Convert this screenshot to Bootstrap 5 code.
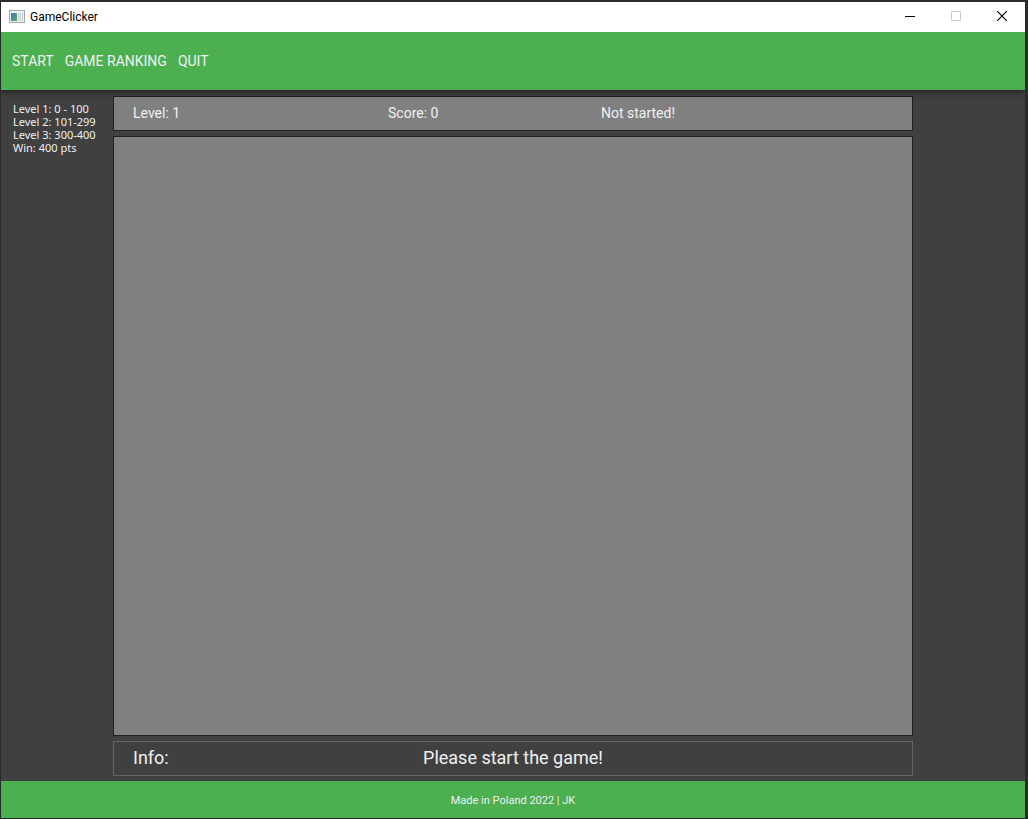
<!DOCTYPE html>
<html lang="en">
<head>
<meta charset="utf-8">
<meta name="viewport" content="width=device-width, initial-scale=1">
<title>GameClicker</title>
<link href="https://cdn.jsdelivr.net/npm/bootstrap@5.3.0/dist/css/bootstrap.min.css" rel="stylesheet">
<style>
  body { background: #2b2b2b; color: #f0f0f0; font-family: Tahoma, "Noto Sans", sans-serif; font-size: 11px; line-height: 13px; padding: 2px 3px 1px 1px; }
  .title-bar { height: 30px; background: #fff; color: #000; font-family: "Segoe UI", Roboto, sans-serif; font-size: 12px; padding-left: 8px; }
  .title-text { margin-left: 5px; }
  .caption-btn { width: 46px; height: 30px; display: grid; place-items: center; border: 0; padding: 0 0 2px; background: transparent; }
  .caption-btn:disabled { opacity: 1; }
  .menu-bar { height: 58px; background: #4caf50; padding: 0 11px; gap: 11px; font-family: Tahoma, Roboto, sans-serif; font-size: 14px; line-height: 20px; box-shadow: 0 2px 6px rgba(0, 0, 0, .5); clip-path: inset(0 0 -10px 0); z-index: 1; }
  .menu-btn { border: 0; padding: 0; background: transparent; color: #f0f0f0; }
  .play-area { background: #404040; display: grid; grid-template-columns: 112px 1fr 112px; }
  .level-list { padding: 12px 0 0 12px; }
  .game-column { padding: 6px 0 5px; gap: 5px; font-family: Bahnschrift, Roboto, sans-serif; }
  .panel-line { height: 35px; border: 1px solid #202020; padding-left: 19px; display: grid; }
  .status-line { background: #808080; grid-template-columns: 255fr 213fr 311fr; font-size: 14px; line-height: 32px; }
  .board { background: #808080; border: 1px solid #202020; }
  .info-line { border-color: #646464; grid-template-columns: 1fr auto 1fr; padding-right: 19px; font-size: 18px; line-height: 32px; }
  .page-foot { height: 37px; background: #4caf50; padding-top: 1px; font-family: Tahoma, Roboto, sans-serif; }
</style>
</head>
<body class="min-vh-100 d-flex flex-column">
  <header class="title-bar d-flex align-items-center">
    <svg width="16" height="14" viewBox="0 0 16 14" aria-hidden="true">
      <defs>
        <linearGradient id="screen" x1="0" y1="0" x2="1" y2="1"><stop offset="0" stop-color="#4779b8"/><stop offset="1" stop-color="#4fa86c"/></linearGradient>
      </defs>
      <rect x=".5" y=".5" width="15" height="12" fill="#eef0f2" stroke="#a3a7ab"/>
      <rect x="2" y="3" width="6" height="8" fill="url(#screen)"/>
      <rect x="9" y="3" width="3" height="8" fill="#d3d6da"/>
      <rect x="13" y="3" width="1" height="8" fill="#c3c9ce"/>
    </svg>
    <span class="title-text me-auto">GameClicker</span>
    <button class="caption-btn" type="button" aria-label="Minimize"><svg width="10" height="11"><path d="M0 5.5h10" stroke="#000"/></svg></button>
    <button class="caption-btn" type="button" aria-label="Maximize" disabled><svg width="10" height="10"><path d="M.5.5h9v9h-9z" fill="none" stroke="#ccc"/></svg></button>
    <button class="caption-btn" type="button" aria-label="Close"><svg width="10" height="10"><path d="M0 0l10 10M10 0L0 10" stroke="#000" stroke-width="1.200"/></svg></button>
  </header>
  <nav class="menu-bar d-flex align-items-center position-relative" aria-label="Game">
    <button class="menu-btn" type="button">START</button>
    <button class="menu-btn" type="button">GAME RANKING</button>
    <button class="menu-btn" type="button">QUIT</button>
  </nav>
  <main class="play-area flex-grow-1">
    <ul class="level-list list-unstyled mb-0">
      <li>Level 1: 0 - 100</li>
      <li>Level 2: 101-299</li>
      <li>Level 3: 300-400</li>
      <li>Win: 400 pts</li>
    </ul>
    <div class="game-column d-flex flex-column">
      <div class="panel-line status-line"><span>Level: 1</span><span>Score: 0</span><span>Not started!</span></div>
      <div class="board flex-grow-1"></div>
      <div class="panel-line info-line"><span>Info:</span><span>Please start the game!</span></div>
    </div>
  </main>
  <footer class="page-foot d-flex align-items-center justify-content-center">Made in Poland 2022 | JK</footer>
<script src="https://cdn.jsdelivr.net/npm/bootstrap@5.3.0/dist/js/bootstrap.bundle.min.js"></script>
</body>
</html>
